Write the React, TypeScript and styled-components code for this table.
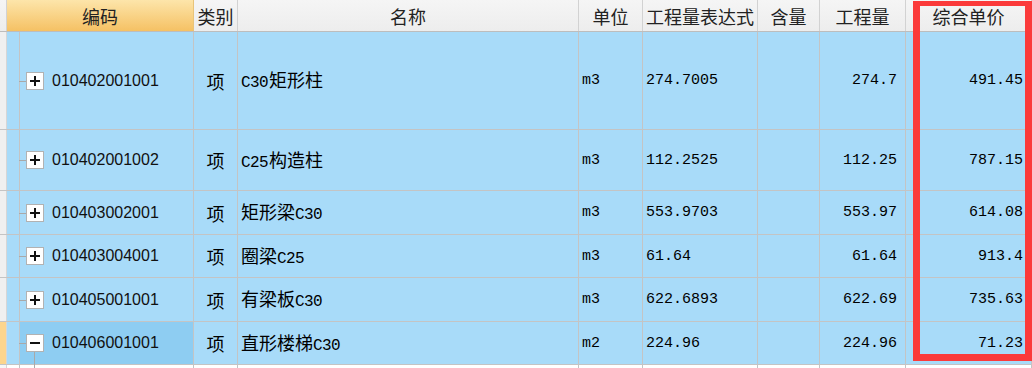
import React from "react";
import styled, { createGlobalStyle, css } from "styled-components";

const GlobalStyle = createGlobalStyle`
  html, body {
    margin: 0;
    padding: 0;
    background: #ffffff;
    overflow: hidden;
  }
`;

const colors = {
  line: "#c4c4c4",
  headLine: "#d2d2d2",
  head: "#f0f0f0",
  blue: "#a8dbf9",
  blueSel: "#8ecdf2",
  orangeTop: "#fde5aa",
  orangeBottom: "#f5c164",
  red: "#fb3a3a",
};

const cjk = `"Noto Sans CJK SC", "Noto Sans", sans-serif`;
const mono = `"Liberation Mono", "DejaVu Sans Mono", monospace`;

// column widths, left to right (px, border included)
const W = {
  ind: 7,
  tree: 13,
  code: 174,
  type: 44,
  name: 341,
  unit: 64,
  expr: 115,
  content: 62,
  qty: 86,
  price: 126,
};

const Sheet = styled.div`
  position: relative;
  width: 1032px;
  height: 368px;
  overflow: hidden;
  font-family: ${cjk};
  color: #000;
`;

const HeaderRow = styled.div`
  display: flex;
  height: 32px;
  box-sizing: border-box;
  border-bottom: 1px solid #bdbdbd;
  background: linear-gradient(#f5f5f5, #ededed);
`;

const HeadCell = styled.div<{ $w: number; $active?: boolean }>`
  flex: 0 0 ${({ $w }) => $w}px;
  box-sizing: border-box;
  border-right: 1px solid ${colors.headLine};
  display: flex;
  align-items: center;
  justify-content: center;
  font-size: 18px;
  color: #222;
  white-space: nowrap;
  ${({ $active }) =>
    $active &&
    css`
      background: linear-gradient(${colors.orangeTop}, ${colors.orangeBottom});
      border-right-color: #e8c47a;
    `}
`;

const Row = styled.div<{ $h: number; $blank?: boolean }>`
  display: flex;
  height: ${({ $h }) => $h}px;
  box-sizing: border-box;
  border-bottom: 1px solid ${colors.line};
  background: ${({ $blank }) => ($blank ? "#ffffff" : colors.blue)};
`;

const Cell = styled.div<{ $w: number; $align?: "left" | "center" | "right"; $sel?: boolean; $tree?: boolean }>`
  position: relative;
  flex: 0 0 ${({ $w }) => $w}px;
  box-sizing: border-box;
  border-right: 1px solid ${colors.line};
  display: flex;
  align-items: center;
  justify-content: ${({ $align }) =>
    $align === "right" ? "flex-end" : $align === "center" ? "center" : "flex-start"};
  padding: ${({ $align, $tree }) =>
    $tree ? "0" : $align === "right" ? "0 8px 0 0" : $align === "center" ? "0" : "0 0 0 3px"};
  font-size: 18px;
  white-space: nowrap;
  background: ${({ $sel }) => ($sel ? colors.blueSel : "transparent")};
`;

const Indicator = styled.div<{ $sel?: boolean; $blank?: boolean }>`
  flex: 0 0 ${W.ind}px;
  box-sizing: border-box;
  border-right: 1px solid #d6d6d6;
  background: ${({ $sel, $blank }) => ($sel ? "#fcd58d" : $blank ? "#f7f7f7" : colors.head)};
`;

const CodeText = styled.span`
  font-family: "Liberation Sans", Arial, sans-serif;
  font-size: 16px;
  color: #111;
  margin-left: 8px;
`;

const Num = styled.span`
  font-family: ${mono};
  font-size: 15px;
`;

const NameText = styled.span`
  line-height: 1;
`;

const Latin = styled.span`
  font-family: ${mono};
  font-size: 16px;
  letter-spacing: -0.6px;
  margin-right: 1px;
`;

const Connector = styled.span`
  position: absolute;
  left: -1px;
  top: 50%;
  width: 7px;
  height: 1px;
  background: #a9a9a9;
`;

const ToggleBox = styled.span<{ $open?: boolean }>`
  position: relative;
  flex: 0 0 auto;
  width: 18px;
  height: 18px;
  box-sizing: border-box;
  margin-left: 6px;
  border: 1px solid #b2b2b2;
  background: #ffffff;

  &::before {
    content: "";
    position: absolute;
    left: 3px;
    top: 7px;
    width: 10px;
    height: 2px;
    background: #111;
  }
  &::after {
    content: "";
    position: absolute;
    left: 7px;
    top: 3px;
    width: 2px;
    height: 10px;
    background: #111;
    display: ${({ $open }) => ($open ? "none" : "block")};
  }
`;

const ChildLine = styled.span`
  position: absolute;
  left: 14px;
  top: calc(50% + 9px);
  width: 1px;
  height: 40px;
  background: #a9a9a9;
`;

const RedFrame = styled.div`
  position: absolute;
  left: 913px;
  top: 1px;
  width: 119px;
  height: 360px;
  box-sizing: border-box;
  border: 7px solid ${colors.red};
  border-top-width: 5px;
  pointer-events: none;
`;

type Item = {
  code: string;
  name: string;
  unit: string;
  expr: string;
  qty: string;
  price: string;
  h: number;
  selected?: boolean;
};

const items: Item[] = [
  { code: "010402001001", name: "C30矩形柱", unit: "m3", expr: "274.7005", qty: "274.7", price: "491.45", h: 98 },
  { code: "010402001002", name: "C25构造柱", unit: "m3", expr: "112.2525", qty: "112.25", price: "787.15", h: 61 },
  { code: "010403002001", name: "矩形梁C30", unit: "m3", expr: "553.9703", qty: "553.97", price: "614.08", h: 44 },
  { code: "010403004001", name: "圈梁C25", unit: "m3", expr: "61.64", qty: "61.64", price: "913.4", h: 43 },
  { code: "010405001001", name: "有梁板C30", unit: "m3", expr: "622.6893", qty: "622.69", price: "735.63", h: 44 },
  { code: "010406001001", name: "直形楼梯C30", unit: "m2", expr: "224.96", qty: "224.96", price: "71.23", h: 43, selected: true },
];

// latin runs use the mono face, chinese stays in the cjk face
function Mixed({ text }: { text: string }) {
  return (
    <NameText>
      {text
        .split(/([A-Za-z0-9.]+)/)
        .filter(Boolean)
        .map((part, i) =>
          /[A-Za-z0-9]/.test(part) ? <Latin key={i}>{part}</Latin> : <React.Fragment key={i}>{part}</React.Fragment>
        )}
    </NameText>
  );
}

export default function App() {
  return (
    <>
      <GlobalStyle />
      <Sheet>
        <HeaderRow>
          <HeadCell $w={W.ind} />
          <HeadCell $w={W.tree + W.code} $active>编码</HeadCell>
          <HeadCell $w={W.type}>类别</HeadCell>
          <HeadCell $w={W.name}>名称</HeadCell>
          <HeadCell $w={W.unit}>单位</HeadCell>
          <HeadCell $w={W.expr}>工程量表达式</HeadCell>
          <HeadCell $w={W.content}>含量</HeadCell>
          <HeadCell $w={W.qty}>工程量</HeadCell>
          <HeadCell $w={W.price}>综合单价</HeadCell>
        </HeaderRow>

        {items.map((it) => (
          <Row key={it.code} $h={it.h}>
            <Indicator $sel={it.selected} />
            <Cell $w={W.tree} />
            <Cell $w={W.code} $sel={it.selected} $tree>
              <Connector />
              <ToggleBox $open={it.selected} />
              {it.selected && <ChildLine />}
              <CodeText>{it.code}</CodeText>
            </Cell>
            <Cell $w={W.type} $align="center">项</Cell>
            <Cell $w={W.name}>
              <Mixed text={it.name} />
            </Cell>
            <Cell $w={W.unit}>
              <Num>{it.unit}</Num>
            </Cell>
            <Cell $w={W.expr}>
              <Num>{it.expr}</Num>
            </Cell>
            <Cell $w={W.content} />
            <Cell $w={W.qty} $align="right">
              <Num>{it.qty}</Num>
            </Cell>
            <Cell $w={W.price} $align="right">
              <Num>{it.price}</Num>
            </Cell>
          </Row>
        ))}

        <Row $h={20} $blank>
          <Indicator $blank />
          <Cell $w={W.tree} />
          <Cell $w={W.code} />
          <Cell $w={W.type} />
          <Cell $w={W.name} />
          <Cell $w={W.unit} />
          <Cell $w={W.expr} />
          <Cell $w={W.content} />
          <Cell $w={W.qty} />
          <Cell $w={W.price} />
        </Row>

        <RedFrame />
      </Sheet>
    </>
  );
}
